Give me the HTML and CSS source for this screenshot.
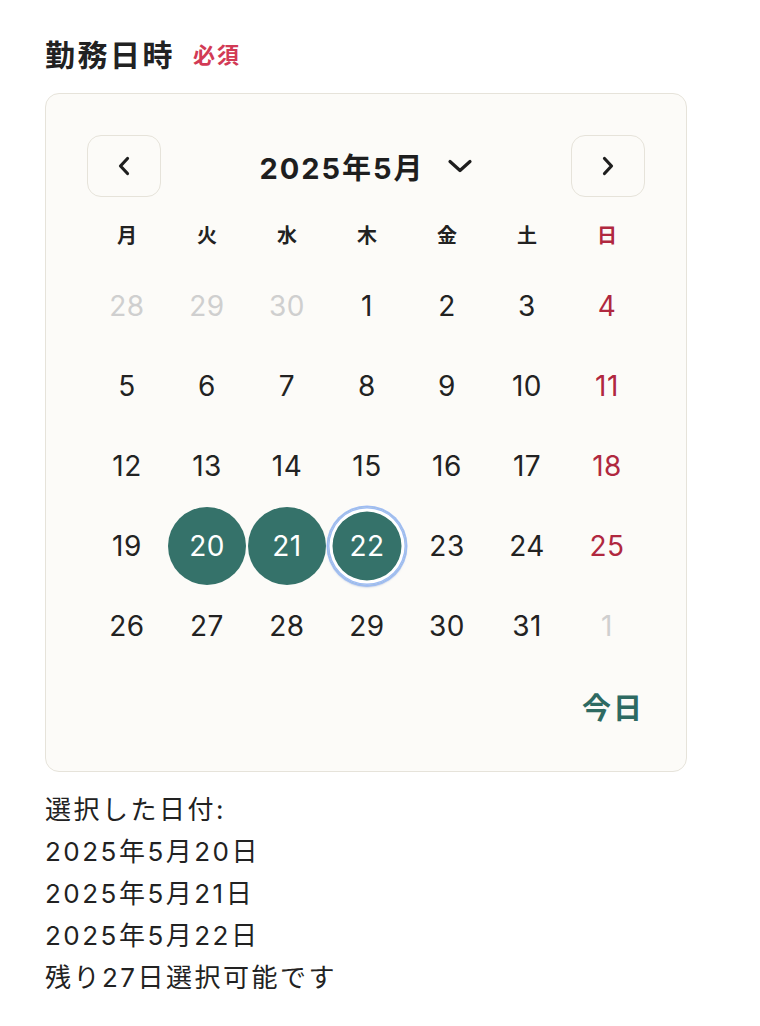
FILE: index.html
```html
<!DOCTYPE html>
<html lang="ja">
<head>
<meta charset="utf-8">
<title>勤務日時</title>
<link rel="stylesheet" href="styles.css">
</head>
<body>
<div class="page">
  <div class="field-label">
    <span class="label-text">勤務日時</span>
    <span class="required">必須</span>
  </div>
  <div class="calendar">
    <div class="cal-header">
      <button class="nav-btn" aria-label="前の月">
        <svg width="14" height="22" viewBox="0 0 14 22"><path d="M10.5 3.5 L3.5 11 L10.5 18.5" fill="none" stroke="#1e1e1e" stroke-width="3.2" stroke-linecap="round" stroke-linejoin="round"/></svg>
      </button>
      <button class="month-title">
        <span>2025年5月</span>
        <svg width="26" height="16" viewBox="0 0 26 16"><path d="M3 3.5 L13 12.5 L23 3.5" fill="none" stroke="#1e1e1e" stroke-width="3.2" stroke-linecap="round" stroke-linejoin="round"/></svg>
      </button>
      <button class="nav-btn" aria-label="次の月">
        <svg width="14" height="22" viewBox="0 0 14 22"><path d="M3.5 3.5 L10.5 11 L3.5 18.5" fill="none" stroke="#1e1e1e" stroke-width="3.2" stroke-linecap="round" stroke-linejoin="round"/></svg>
      </button>
    </div>
    <div class="weekdays">
      <span>月</span><span>火</span><span>水</span><span>木</span><span>金</span><span>土</span><span class="sun">日</span>
    </div>
    <div class="days">
      <span class="day muted">28</span><span class="day muted">29</span><span class="day muted">30</span><span class="day">1</span><span class="day">2</span><span class="day">3</span><span class="day sun">4</span>
      <span class="day">5</span><span class="day">6</span><span class="day">7</span><span class="day">8</span><span class="day">9</span><span class="day">10</span><span class="day sun">11</span>
      <span class="day">12</span><span class="day">13</span><span class="day">14</span><span class="day">15</span><span class="day">16</span><span class="day">17</span><span class="day sun">18</span>
      <span class="day">19</span><span class="day selected">20</span><span class="day selected">21</span><span class="day selected focused">22</span><span class="day">23</span><span class="day">24</span><span class="day sun">25</span>
      <span class="day">26</span><span class="day">27</span><span class="day">28</span><span class="day">29</span><span class="day">30</span><span class="day">31</span><span class="day muted">1</span>
    </div>
    <div class="cal-footer">
      <button class="today-btn">今日</button>
    </div>
  </div>
  <div class="summary">
    <p>選択した日付:</p>
    <p>2025年5月20日</p>
    <p>2025年5月21日</p>
    <p>2025年5月22日</p>
    <p>残り27日選択可能です</p>
  </div>
</div>
</body>
</html>
```

FILE: styles.css
```css
* { box-sizing: border-box; }
html, body {
  margin: 0;
  padding: 0;
  background: #ffffff;
}
body {
  font-family: "Inter", "Noto Sans CJK JP", sans-serif;
  color: #222222;
}
.page {
  padding: 33px 0 0 45px;
  width: 733px;
}
.field-label {
  display: flex;
  align-items: center;
  gap: 18px;
  height: 40px;
  margin-bottom: 20px;
}
.label-text {
  font-family: "Noto Sans CJK JP", sans-serif;
  font-size: 30px;
  font-weight: 700;
  letter-spacing: 2.5px;
  color: #222222;
}
.required {
  font-family: "Noto Sans CJK JP", sans-serif;
  font-size: 22px;
  font-weight: 700;
  letter-spacing: 2px;
  color: #d23a55;
}
.calendar {
  width: 642px;
  background: #fcfbf8;
  border: 1.5px solid #e6e3da;
  border-radius: 14px;
  padding: 41px 41px 41px 41px;
}
button {
  font-family: inherit;
  background: none;
  border: none;
  padding: 0;
  margin: 0;
  color: inherit;
  cursor: pointer;
}
.cal-header {
  display: flex;
  align-items: center;
  justify-content: space-between;
  height: 62px;
  margin-bottom: 17px;
}
.nav-btn {
  width: 74px;
  height: 62px;
  border: 1.5px solid #e6e3da;
  border-radius: 14px;
  background: #fcfbf8;
  display: flex;
  align-items: center;
  justify-content: center;
}
.month-title {
  display: flex;
  align-items: center;
  gap: 22px;
  font-size: 29px;
  font-weight: 700;
  color: #1e1e1e;
  letter-spacing: 2px;
}
.weekdays {
  display: grid;
  grid-template-columns: repeat(7, 80px);
  height: 40px;
  align-items: center;
  margin-bottom: 12px;
}
.weekdays span {
  text-align: center;
  font-family: "Noto Sans CJK JP", sans-serif;
  font-size: 20px;
  font-weight: 700;
  color: #222222;
}
.weekdays .sun { color: #b0283f; }
.days {
  display: grid;
  grid-template-columns: repeat(7, 80px);
  grid-auto-rows: 80px;
}
.day {
  width: 78px;
  height: 78px;
  margin: 1px;
  border-radius: 50%;
  display: flex;
  align-items: center;
  justify-content: center;
  font-size: 28px;
  font-weight: 400;
  color: #222222;
  letter-spacing: 0.5px;
}
.day.muted { color: #cfcfcf; }
.day.sun { color: #b0283f; }
.day.selected {
  background: #35726a;
  color: #ffffff;
}
.day.focused {
  box-shadow: inset 0 0 0 1.5px #9ebcf3, inset 0 0 0 4.5px #ffffff, 0 0 0 1.5px #9ebcf3, 0 2px 2px rgba(50, 100, 190, 0.5);
}
.cal-footer {
  display: flex;
  justify-content: flex-end;
  margin-top: 20px;
  height: 44px;
  align-items: center;
}
.today-btn {
  font-family: "Noto Sans CJK JP", sans-serif;
  font-size: 29px;
  font-weight: 700;
  color: #2e6a62;
  padding: 0 1px 0 2px;
  margin-bottom: 4px;
  letter-spacing: 2px;
  line-height: 40px;
}
.summary {
  margin-top: 17px;
}
.summary p {
  margin: 0;
  font-size: 26px;
  line-height: 42px;
  letter-spacing: 2.5px;
  color: #222222;
}
```
